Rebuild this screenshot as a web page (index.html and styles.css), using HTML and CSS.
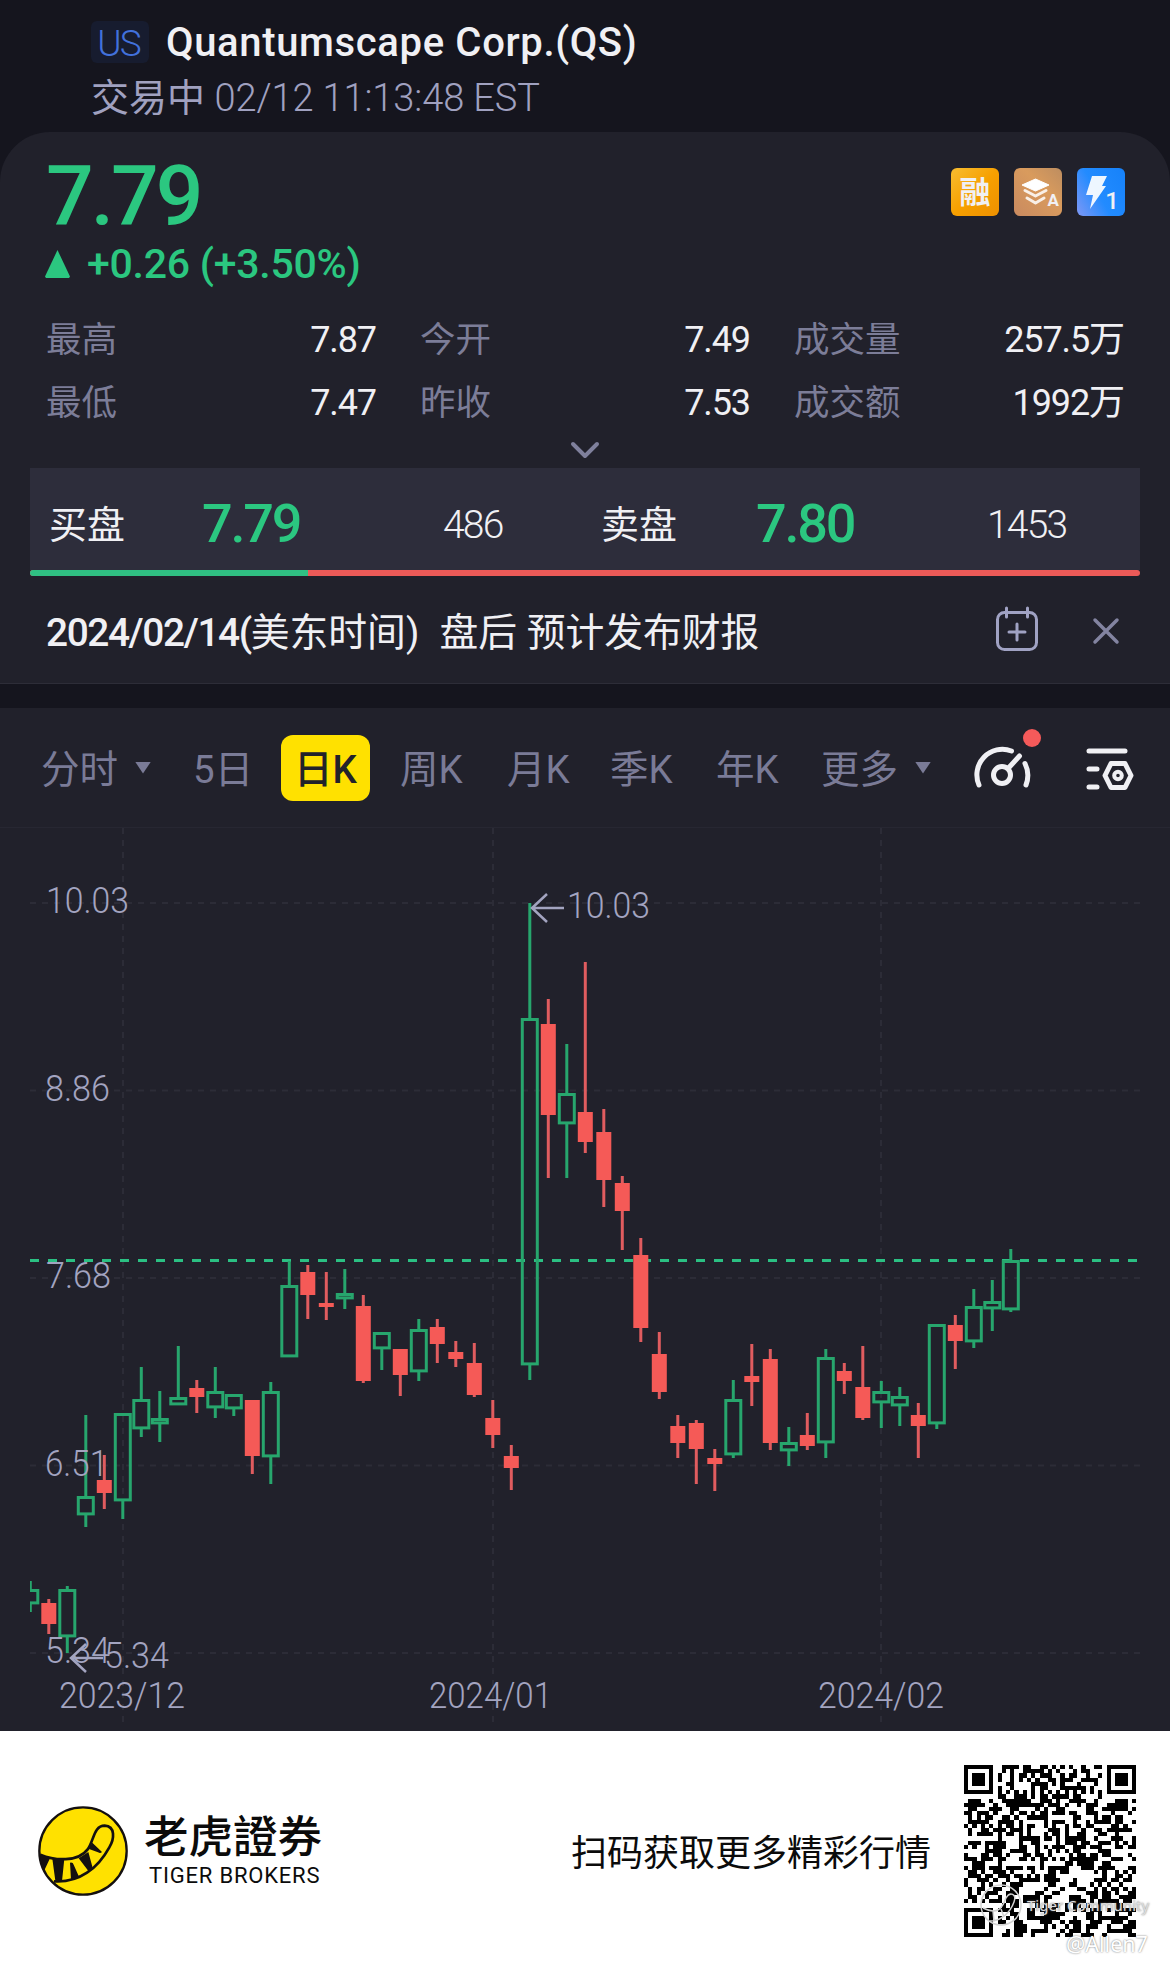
FILE: index.html
```html
<!DOCTYPE html>
<html lang="zh-CN">

<head>
    <meta charset="UTF-8">
    <meta name="viewport" content="width=device-width, initial-scale=1.0">
    <title>Quantumscape Corp.(QS)</title>
    <link rel="stylesheet" href="styles.css">
</head>

<body>
    <!-- Header Section -->
    <header class="header">
        <div class="title-row">
            <span class="market">US</span>
            <h1 class="title">Quantumscape Corp.(QS)</h1>
        </div>
        <div class="status">交易中 <span class="status-time">02/12 11:13:48 EST</span></div>
    </header>

    <!-- Quote Section -->
    <section class="quote">
        <div class="price-row">
            <div class="price">7.79</div>
            <div class="badges">
                <span class="badge badge-margin">融</span>
                <span class="badge badge-level">
                    <svg width="48" height="48" viewBox="0 0 48 48">
                        <path d="M21.5 11 L35 17 L21.5 23 L8 17 Z" fill="#fff" stroke="#fff" stroke-width="1" stroke-linejoin="round" />
                        <path d="M11 22.5 L21.5 28 L32 22.5 M13 30 L21.5 35 L30 30" fill="none" stroke="#fff" stroke-opacity=".85" stroke-width="3" stroke-linecap="round" stroke-linejoin="round" />
                    </svg>
                    <b class="badge-sub">A</b>
                </span>
                <span class="badge badge-flash">
                    <svg width="48" height="48" viewBox="0 0 48 48">
                        <path d="M15 8 H30 L25 18 H29 L13 41 L16 27 H9 Z" fill="#fff" fill-opacity=".92" />
                    </svg>
                    <b class="badge-sub badge-one">1</b>
                </span>
            </div>
        </div>
        <div class="change"><i class="triangle-up"></i>+0.26 (+3.50%)</div>

        <div class="stats">
            <div class="stat"><span>最高</span><b>7.87</b></div>
            <div class="stat"><span>今开</span><b>7.49</b></div>
            <div class="stat"><span>成交量</span><b>257.5万</b></div>
            <div class="stat"><span>最低</span><b>7.47</b></div>
            <div class="stat"><span>昨收</span><b>7.53</b></div>
            <div class="stat"><span>成交额</span><b>1992万</b></div>
        </div>
        <div class="expand">
            <svg width="32" height="20" viewBox="0 0 32 20">
                <path d="M4 3 L16 15 L28 3" fill="none" stroke="#7f809c" stroke-width="4" stroke-linecap="round" stroke-linejoin="round" />
            </svg>
        </div>

        <div class="depth">
            <span class="depth-name">买盘</span>
            <span class="depth-price">7.79</span>
            <span class="depth-size">486</span>
            <span class="depth-name">卖盘</span>
            <span class="depth-price">7.80</span>
            <span class="depth-size">1453</span>
        </div>
        <div class="depth-bar"><div class="depth-buy" style="width: 25.07%"></div></div>

        <div class="notice">
            <div class="notice-text"><b>2024/02/14(</b>美东时间)<span class="notice-info">盘后 预计发布财报</span></div>
            <svg class="calendar" width="44" height="46" viewBox="0 0 44 46">
                <g fill="none" stroke="#a0a2c3" stroke-width="3" stroke-linecap="round">
                    <rect x="2.5" y="6.5" width="39" height="37" rx="7" />
                    <path d="M11.5 2 V11 M32.500 2 V11 M22 18 V34 M14 26 H30" />
                </g>
            </svg>
            <svg width="28" height="28" viewBox="0 0 28 28">
                <path d="M3 3 L25 25 M25 3 L3 25" stroke="#8384a1" stroke-width="3.500" stroke-linecap="round" />
            </svg>
        </div>
    </section>

    <!-- Chart Section -->
    <section class="chart">
        <nav class="tabs">
            <a class="tab tab-first">分时<i class="triangle-down"></i></a>
            <a class="tab tab-5d">5日</a>
            <a class="tab active">日K</a>
            <a class="tab tab-week">周K</a>
            <a class="tab tab-month">月K</a>
            <a class="tab tab-season">季K</a>
            <a class="tab tab-year">年K</a>
            <a class="tab tab-more">更多<i class="triangle-down"></i></a>
            <svg class="tools" width="170" height="70" viewBox="970 728 170 70">
                <g fill="none" stroke="#f0f0f4" stroke-width="5" stroke-linecap="round">
                    <path d="M979 785 A25.500 25.500 0 0 1 1011.500 751" />
                    <path d="M1025 763.500 A27 27 0 0 1 1026 785" />
                    <circle cx="1002" cy="775" r="8.500" />
                    <path d="M1008.500 768 L1019.500 756" />
                    <path d="M1089 751 H1125 M1089 769 H1097 M1089 787 H1097" />
                    <path d="M1111 763.500 H1125 L1131 775.500 L1125 787.500 H1111 L1105 775.500 Z" stroke-linejoin="round" />
                    <circle cx="1118" cy="775.500" r="3.800" stroke-width="4" />
                </g>
                <circle cx="1032" cy="738" r="9" fill="#f55a5a" />
            </svg>
        </nav>
        <svg class="kline" id="kline" width="1170" height="903" viewBox="0 828 1170 903"></svg>
    </section>

    <!-- Footer Section -->
    <footer class="footer">
        <svg class="logo" width="90" height="90" viewBox="25 46 270 270">
            <circle cx="160" cy="181" r="131" fill="#ffe100" stroke="#141010" stroke-width="7" />
            <path d="M32 192 C75 210 145 215 174 176 C193 150 192 105 225 105 C258 107 254 145 239 170 C205 232 150 277 73 272" fill="none" stroke="#141010" stroke-width="8" />
            <path d="M32 190 L61 203 L43 241 L34 222 Z M68 204 H104 L97 272 L77 270 Z M121 216 Q130 214 132 222 L148 258 L124 267 Z M147 203 L176 184 L190 235 L178 243 Z M176 174 L188 156 L217 184 Q212 190 205 185 Z" fill="#141010" />
        </svg>
        <div class="brand">
            <div class="brand-cn">老虎證券</div>
            <div class="brand-en">TIGER BROKERS</div>
        </div>
        <div class="scan">扫码获取更多精彩行情</div>
        <div class="qr-box">
            <svg id="qr" width="172" height="172" viewBox="0 0 41 41" shape-rendering="crispEdges"></svg>
            <div class="watermark">
                <svg width="44" height="44" viewBox="0 0 44 44">
                    <g fill="none" stroke="#d2d2d2" stroke-width="1.500">
                        <circle cx="22" cy="22" r="20" />
                        <path d="M4 25 C18 32 23 26 27 15 C31 8 38 11 35 19 C31 30 22 38 11 38 M14 28 L15 38 M22 26 L25 34" />
                    </g>
                </svg>
                <span>Tiger Community</span>
            </div>
            <div class="author">@Allen7</div>
        </div>
    </footer>

    <script src="script.js"></script>
</body>

</html>
```
FILE: styles.css
```css
/* General Styles */
* {
    box-sizing: border-box;
}

body {
    margin: 0;
    width: 1170px;
    background-color: #15151e;
    color: #f0f0f4;
    font-family: Roboto, "Noto Sans CJK SC", sans-serif;
}

svg {
    display: block;
    flex: none;
}

b {
    font-weight: 400;
}

/* Header Styles */
.header {
    height: 132px;
    padding: 18px 0 0 91px;
}

.title-row {
    display: flex;
    align-items: center;
    height: 48px;
}

.market {
    width: 58px;
    height: 42px;
    margin-right: 17px;
    border-radius: 6px;
    background-color: #171c2f;
    color: #4271dc;
    font-size: 37px;
    font-weight: 300;
    line-height: 46px;
    text-align: center;
    letter-spacing: -2px;
    text-indent: -3px;
}

.title {
    margin: 0;
    font-size: 40px;
    font-weight: 500;
    line-height: 49px;
    letter-spacing: 0.65px;
    white-space: nowrap;
}

.status {
    height: 60px;
    color: #a0a1c0;
    font-size: 38px;
    line-height: 64px;
    white-space: nowrap;
}

.status-time {
    font-weight: 300;
    letter-spacing: -0.1px;
}

/* Quote */
.quote {
    height: 552px;
    border-radius: 50px 50px 0 0;
    border-bottom: 1px solid #2d2d38;
    background-color: #21212b;
}

.price-row {
    display: flex;
    justify-content: space-between;
    height: 104px;
    padding: 0 45px 0 46px;
}

.price {
    color: #2bc780;
    font-size: 84px;
    font-weight: 500;
    line-height: 130px;
    letter-spacing: -3px;
}

.badges {
    display: flex;
    gap: 15px;
    padding-top: 36px;
}

.badge {
    position: relative;
    width: 48px;
    height: 48px;
    border-radius: 6px;
    text-align: center;
    overflow: hidden;
}

.badge-margin {
    background: linear-gradient(135deg, #f7bd31, #f7a000 50%, #ee9000);
    font-size: 31px;
    font-weight: 700;
    line-height: 50px;
}

.badge-level {
    background: linear-gradient(45deg, #c98a60, #d99b5d 60%, #bd8d60);
}

.badge-flash {
    background: linear-gradient(60deg, #7f98f5, #228bff 45%, #1682fa);
}

.badge-sub {
    position: absolute;
    right: 3px;
    bottom: 7px;
    font-size: 17px;
    font-weight: 700;
    line-height: 17px;
}

.badge-one {
    right: 6px;
    bottom: 4px;
    font-size: 24px;
    font-weight: 500;
    line-height: 22px;
}

.change {
    display: flex;
    align-items: center;
    height: 56px;
    padding-left: 45px;
    color: #2bc780;
    font-size: 41px;
    font-weight: 500;
    letter-spacing: -0.25px;
    white-space: pre;
}

.triangle-up {
    width: 25px;
    height: 28px;
    margin: 0 17px 0 0;
    background-color: #2bc780;
    clip-path: polygon(50% 0, 100% 95%, 96% 100%, 4% 100%, 0 95%);
}

.stats {
    display: grid;
    grid-template-columns: repeat(3, 330px);
    grid-auto-rows: 63px;
    column-gap: 44px;
    height: 144px;
    padding: 16px 46px 0;
}

.stat {
    display: flex;
    justify-content: space-between;
    font-size: 35.5px;
    line-height: 64px;
    white-space: nowrap;
}

.stat span {
    color: #7c7d98;
}

.stat b {
    font-size: 36px;
    letter-spacing: -1.1px;
}

.expand {
    display: flex;
    justify-content: center;
    height: 32px;
    padding-top: 5px;
}

/* Bid and ask */
.depth {
    display: grid;
    grid-template-columns: 153px 200px 199px 155px 190px 1fr;
    align-items: center;
    height: 102px;
    margin: 0 30px;
    padding: 9px 0 0 19px;
    background-color: #2d2d3b;
    font-size: 38px;
}

.depth-name {
    padding-bottom: 4px;
}

.depth-price {
    color: #2bc780;
    font-size: 54px;
    font-weight: 500;
    letter-spacing: -2.2px;
}

.depth-size {
    padding: 2px 0 0 41px;
    font-size: 39px;
    font-weight: 300;
    letter-spacing: -1.8px;
}

.depth-bar {
    height: 6px;
    margin: 0 30px;
    border-radius: 3px;
    background-color: #ec5a58;
    overflow: hidden;
}

.depth-buy {
    height: 6px;
    background-color: #30c083;
}

.notice {
    display: flex;
    align-items: center;
    height: 107px;
    padding: 2px 50px 0 46px;
    font-size: 38.8px;
}

.notice-text {
    flex: 1;
    padding-bottom: 3px;
    white-space: nowrap;
}

.notice-text b {
    font-weight: 500;
    letter-spacing: -1.4px;
}

.notice-info {
    margin-left: 20px;
}

.calendar {
    margin: 0 53px 4px 0;
}

/* Chart */
.chart {
    height: 1023px;
    margin-top: 24px;
    background-color: #21212b;
}

.tabs {
    display: flex;
    align-items: center;
    height: 120px;
    padding: 0 0 0 41px;
    border-bottom: 1px solid #272732;
    color: #7a7b97;
    font-size: 38.5px;
    line-height: 56px;
}

.tab {
    display: flex;
    align-items: center;
    flex: none;
    padding-top: 4px;
    white-space: nowrap;
}

.triangle-down {
    width: 16px;
    height: 12px;
    margin: 0 0 4px 17px;
    background-color: #7a7b97;
    clip-path: polygon(0 0, 100% 0, 50% 100%);
}

.tab-first {
    width: 152px;
}

.tab-5d {
    width: 88px;
}

.active {
    justify-content: center;
    width: 89px;
    height: 66px;
    margin-right: 30px;
    border-radius: 12px;
    background-color: #ffe100;
    color: #22222a;
    font-weight: 500;
}

.tab-week {
    width: 107px;
}

.tab-month {
    width: 103px;
}

.tab-season {
    width: 106px;
}

.tab-year {
    width: 105px;
}

.tab-more {
    width: 149px;
}

.tools {
    margin-bottom: 10px;
}

.kline text {
    fill: #a3a4c0;
    font-size: 36px;
    font-weight: 300;
}

/* Footer */
.footer {
    display: flex;
    align-items: center;
    height: 240px;
    padding: 0 34px 0 38px;
    background-color: #fff;
    color: #0b0b0b;
}

.brand {
    width: 443px;
    padding: 0 0 4px 16px;
}

.brand-cn {
    font-family: "Noto Sans CJK TC", sans-serif;
    font-size: 44.500px;
    font-weight: 500;
    line-height: 50px;
}

.brand-en {
    padding: 4px 0 0 5px;
    font-size: 22px;
    line-height: 26px;
    letter-spacing: 0.8px;
}

.scan {
    width: 393px;
    font-size: 36px;
    line-height: 46px;
    padding-top: 6px;
    white-space: nowrap;
}

.qr-box {
    position: relative;
}

/* Watermark lies over the QR code */
.watermark {
    position: absolute;
    left: 15px;
    top: 118px;
    display: flex;
    align-items: center;
    gap: 4px;
    color: #dcdcdc;
    font-family: "Noto Sans", sans-serif;
    font-size: 15px;
    text-shadow: 0 0 2px #777;
    white-space: nowrap;
}

.author {
    position: absolute;
    left: 102px;
    top: 165px;
    color: #fff;
    font-family: "Noto Sans", sans-serif;
    font-size: 21.500px;
    line-height: 28px;
    text-shadow: 0 0 2px #666;
}
```
FILE: script.js
```javascript
const GREEN = '#27a66d';
const RED = '#f55a57';

// Each candle: direction, high, body top, body bottom, low
const candles = [
    ['u', 1581, 1589, 1604, 1612], ['d', 1599, 1603, 1624, 1634], ['u', 1586, 1589, 1637, 1653],
    ['u', 1415, 1496, 1515, 1527], ['d', 1455, 1480, 1493, 1509], ['u', 1413, 1413, 1501, 1519],
    ['u', 1367, 1399, 1429, 1437], ['u', 1391, 1418, 1424, 1442], ['u', 1346, 1397, 1405, 1405],
    ['d', 1380, 1388, 1397, 1413], ['u', 1367, 1391, 1408, 1418], ['u', 1394, 1394, 1409, 1416],
    ['d', 1400, 1400, 1456, 1474], ['u', 1382, 1391, 1457, 1484], ['u', 1261, 1285, 1357, 1357],
    ['d', 1265, 1272, 1295, 1319], ['d', 1272, 1303, 1307, 1320], ['u', 1269, 1293, 1299, 1309],
    ['d', 1295, 1306, 1381, 1383], ['u', 1332, 1332, 1349, 1370], ['d', 1349, 1349, 1375, 1396],
    ['u', 1319, 1329, 1372, 1381], ['d', 1319, 1327, 1344, 1363], ['d', 1341, 1352, 1359, 1367],
    ['d', 1343, 1363, 1395, 1397], ['d', 1400, 1418, 1435, 1448], ['d', 1445, 1456, 1468, 1490],
    ['u', 903, 1018, 1365, 1380], ['d', 999, 1024, 1115, 1178], ['u', 1044, 1093, 1124, 1178],
    ['d', 962, 1112, 1142, 1153], ['d', 1109, 1132, 1180, 1207], ['d', 1176, 1183, 1211, 1250],
    ['d', 1238, 1255, 1328, 1342], ['d', 1332, 1354, 1392, 1399], ['d', 1415, 1426, 1443, 1458],
    ['d', 1420, 1423, 1449, 1484], ['d', 1449, 1458, 1464, 1491], ['u', 1380, 1399, 1455, 1458],
    ['d', 1344, 1376, 1382, 1406], ['d', 1349, 1359, 1443, 1450], ['u', 1427, 1442, 1451, 1466],
    ['d', 1413, 1435, 1446, 1450], ['u', 1349, 1357, 1443, 1458], ['d', 1363, 1371, 1381, 1394],
    ['d', 1346, 1387, 1418, 1420], ['u', 1381, 1391, 1403, 1428], ['u', 1387, 1396, 1406, 1426],
    ['d', 1403, 1415, 1426, 1458], ['u', 1324, 1324, 1424, 1429], ['d', 1315, 1325, 1341, 1369],
    ['u', 1289, 1306, 1342, 1348], ['u', 1280, 1301, 1309, 1331], ['u', 1249, 1260, 1310, 1312]
];

function drawChart() {
    let svg = '<clipPath id="plot"><rect x="30" y="828" width="1110" height="903"/></clipPath>';

    // Grid
    for (const y of [903, 1090.5, 1278, 1465.5, 1653]) {
        svg += `<path d="M30 ${y} H1140" stroke="#2c2c37" stroke-width="2" stroke-dasharray="6 6"/>`;
    }
    for (const x of [123, 493, 881]) {
        svg += `<path d="M${x} 828 V1725" stroke="#2c2c37" stroke-width="2" stroke-dasharray="6 6"/>`;
    }

    // Current price line
    svg += '<path d="M30 1260.5 H1138" stroke="#2bc083" stroke-width="3" stroke-dasharray="9 9"/>';

    // Candles
    svg += '<g clip-path="url(#plot)">';
    candles.forEach(([dir, high, top, bottom, low], i) => {
        const x = 30.3 + i * 18.5;
        if (dir === 'u') {
            svg += `<path d="M${x} ${high} V${top + 1} M${x} ${bottom - 1} V${low}" stroke="${GREEN}" stroke-width="3"/>`;
            svg += `<rect x="${x - 7.5}" y="${top + 1.5}" width="15" height="${bottom - top - 2.6}" fill="none" stroke="${GREEN}" stroke-width="3"/>`;
        } else {
            svg += `<path d="M${x} ${high} V${low}" stroke="#e05c5f" stroke-width="3"/>`;
            svg += `<rect x="${x - 7.5}" y="${top}" width="15" height="${bottom - top}" fill="${RED}"/>`;
        }
    });
    svg += '</g>';

    // Labels: x, baseline, width, text
    const labels = [
        [46, 913, 83, '10.03'], [45, 1101, 65, '8.86'], [46, 1288, 65, '7.68'],
        [45, 1476, 63, '6.51'], [45, 1663, 65, '5.34'],
        [567, 918, 83, '10.03'], [104, 1668, 65, '5.34'],
        [59, 1708, 126, '2023/12'], [429, 1708, 123, '2024/01'], [818, 1708, 126, '2024/02']
    ];
    for (const [x, y, w, text] of labels) {
        svg += `<text x="${x}" y="${y}" textLength="${w}" lengthAdjust="spacingAndGlyphs">${text}</text>`;
    }

    // High and low pointers
    svg += '<path d="M547 894 L532 908 L547 922 M532 908 H564 M86 1644 L71 1658 L86 1672 M71 1658 H103" fill="none" stroke="#a3a4c0" stroke-width="2.5"/>';

    document.getElementById('kline').innerHTML = svg;
}

function drawQr() {
    const size = 41;
    let seed = 20240212;
    let path = '';

    // Finder square: dark ring with a dark 3x3 centre
    const finder = (x, y) => {
        const d = Math.max(Math.abs(x - 3), Math.abs(y - 3));
        return d === 3 || d <= 1;
    };

    for (let y = 0; y < size; y++) {
        for (let x = 0; x < size; x++) {
            seed = (seed * 1103515245 + 12345) % 2147483648;
            let dark = seed / 2147483648 < 0.52;
            if (x < 8 && y < 8) dark = x < 7 && y < 7 && finder(x, y);
            else if (x > 32 && y < 8) dark = x > 33 && y < 7 && finder(x - 34, y);
            else if (x < 8 && y > 32) dark = x < 7 && y > 33 && finder(x, y - 34);
            else if (x === 6 || y === 6) dark = (x + y) % 2 === 0;
            else if (Math.abs(x - 34) < 3 && Math.abs(y - 34) < 3) {
                dark = Math.max(Math.abs(x - 34), Math.abs(y - 34)) !== 1;
            }
            if (dark) path += `M${x} ${y}h1v1h-1z`;
        }
    }
    document.getElementById('qr').innerHTML = `<path d="${path}" fill="#000"/>`;
}

drawChart();
drawQr();
```
